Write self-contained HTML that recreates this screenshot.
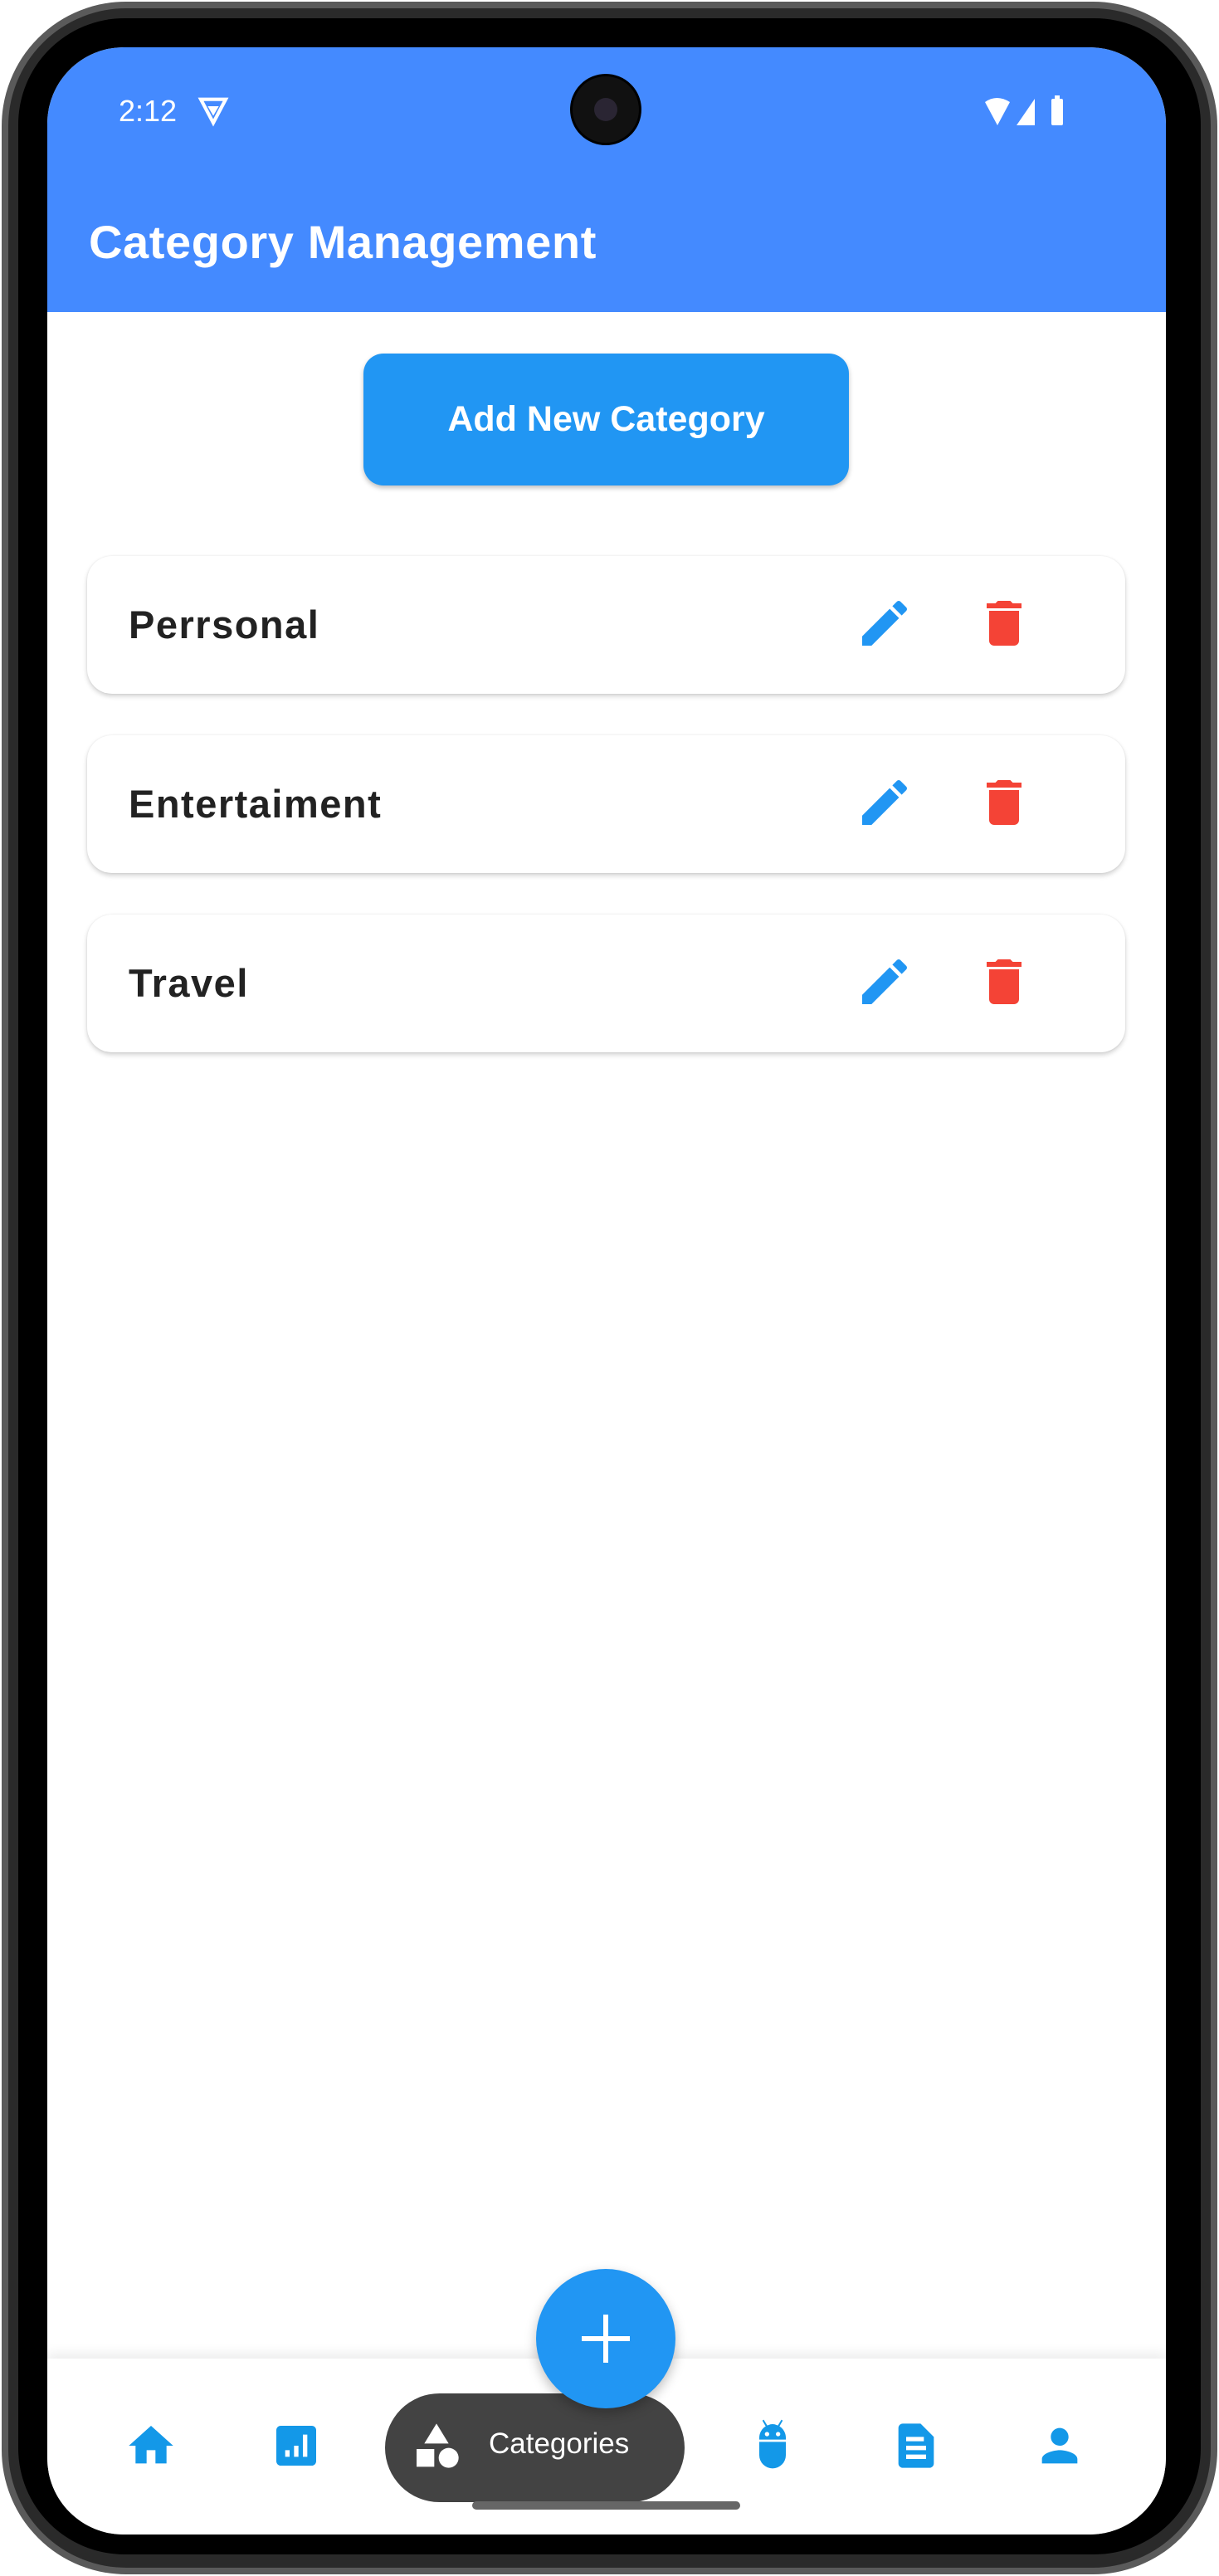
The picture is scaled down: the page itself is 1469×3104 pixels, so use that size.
<!DOCTYPE html>
<html><head><meta charset="utf-8"><style>
*{margin:0;padding:0;box-sizing:border-box}
body{width:1469px;height:3104px;background:#fff;position:relative;overflow:hidden;font-family:"Liberation Sans",sans-serif}
.phone{position:absolute;left:2px;top:2px;width:1465px;height:3100px;border-radius:150px;background:#2a2a2a;border:8px solid #5a5a5a}
.bezel{position:absolute;left:22px;top:22px;width:1425px;height:3056px;border-radius:128px;background:#000}
.screen{position:absolute;left:57px;top:57px;width:1348px;height:2997px;border-radius:92px;background:#fff;overflow:hidden}
.bar{position:absolute;left:0;top:0;width:1348px;height:319px;background:#448AFF}
.abs{position:absolute}
.card{position:absolute;left:48px;width:1251px;height:166px;background:#fff;border-radius:30px;box-shadow:0 3px 6px rgba(0,0,0,.18),0 0 2px rgba(0,0,0,.08)}
.card span{position:absolute;left:50px;top:0;line-height:166px;font-size:47px;color:#222;letter-spacing:1.5px;font-weight:bold}
.card svg{position:absolute;top:45px}
.nav{position:absolute;left:0;top:2785px;width:1348px;height:212px;background:#fff;box-shadow:0 -6px 14px rgba(0,0,0,.08)}
</style></head><body>
<div class="phone"></div>
<div class="bezel"></div>
<div class="screen">
 <div class="bar"></div>
 <div class="abs" style="left:86px;top:56px;color:#fff;font-size:36px">2:12</div>
 <svg class="abs" style="left:180px;top:56px" width="40" height="40" viewBox="0 0 24 24"><path d="M3 4h18l-9 17z" fill="none" stroke="#fff" stroke-width="2.5"/><path d="M8 9h8l-4 7z" fill="#fff"/></svg>
 <div class="abs" style="left:630px;top:32px;width:86px;height:86px;border-radius:50%;background:#111;border:3px solid #000"><div style="margin:26px;width:28px;height:28px;border-radius:50%;background:#2a2533"></div></div>
 <svg class="abs" style="left:1130px;top:58px" width="120" height="40" viewBox="0 0 60 20"><path d="M0 4Q7-1 15 4L7.5 18z" fill="#fff"/><path d="M30 2V18H19z" fill="#fff"/><rect x="40" y="2" width="7" height="16" rx="1" fill="#fff"/><rect x="42" y="0" width="3" height="3" fill="#fff"/></svg>
 <div class="abs" style="left:50px;top:202px;color:#fff;font-size:56px;font-weight:bold;letter-spacing:0.6px">Category Management</div>
 <div class="abs" style="left:381px;top:369px;width:585px;height:159px;border-radius:24px;background:#2196F3;box-shadow:0 3px 6px rgba(0,0,0,.25);color:#fff;font-size:43px;font-weight:bold;text-align:center;line-height:159px">Add New Category</div>

 <div class="card" style="top:613px"><span>Perrsonal</span>
  <svg style="left:925px" width="72" height="72" viewBox="0 0 24 24"><path fill="#2196F3" d="M3 17.25V21h3.75L17.81 9.94l-3.75-3.75L3 17.25zM20.71 7.04a1 1 0 000-1.41l-2.34-2.34a1 1 0 00-1.41 0l-1.83 1.83 3.75 3.75 1.83-1.83z"/></svg>
  <svg style="left:1069px" width="72" height="72" viewBox="0 0 24 24"><path fill="#F44336" d="M6 19c0 1.1.9 2 2 2h8c1.1 0 2-.9 2-2V7H6v12zM19 4h-3.5l-1-1h-5l-1 1H5v2h14V4z"/></svg></div>
 <div class="card" style="top:829px"><span>Entertaiment</span>
  <svg style="left:925px" width="72" height="72" viewBox="0 0 24 24"><path fill="#2196F3" d="M3 17.25V21h3.75L17.81 9.94l-3.75-3.75L3 17.25zM20.71 7.04a1 1 0 000-1.41l-2.34-2.34a1 1 0 00-1.41 0l-1.830 1.83 3.75 3.75 1.83-1.83z"/></svg>
  <svg style="left:1069px" width="72" height="72" viewBox="0 0 24 24"><path fill="#F44336" d="M6 19c0 1.1.9 2 2 2h8c1.1 0 2-.9 2-2V7H6v12zM19 4h-3.5l-1-1h-5l-1 1H5v2h14V4z"/></svg></div>
 <div class="card" style="top:1045px"><span>Travel</span>
  <svg style="left:925px" width="72" height="72" viewBox="0 0 24 24"><path fill="#2196F3" d="M3 17.25V21h3.75L17.81 9.94l-3.75-3.75L3 17.25zM20.71 7.04a1 1 0 000-1.41l-2.34-2.34a1 1 0 00-1.41 0l-1.83 1.83 3.75 3.75 1.83-1.83z"/></svg>
  <svg style="left:1069px" width="72" height="72" viewBox="0 0 24 24"><path fill="#F44336" d="M6 19c0 1.1.9 2 2 2h8c1.1 0 2-.9 2-2V7H6v12zM19 4h-3.5l-1-1h-5l-1 1H5v2h14V4z"/></svg></div>

 <div class="nav"></div>
 <svg class="abs" style="left:93px;top:2858px" width="64" height="64" viewBox="0 0 24 24"><path fill="#1398E8" d="M10 20v-6h4v6h5v-8h3L12 3 2 12h3v8z"/></svg>
 <svg class="abs" style="left:268px;top:2858px" width="64" height="64" viewBox="0 0 24 24"><path fill="#1398E8" d="M19 3H5a2 2 0 00-2 2v14a2 2 0 002 2h14a2 2 0 002-2V5a2 2 0 00-2-2zM9 17H7v-3h2v3zm4 0h-2v-5h2v5zm4 0h-2V7h2v10z"/></svg>
 <div class="abs" style="left:407px;top:2827px;width:361px;height:131px;border-radius:66px;background:#434343"></div>
 <svg class="abs" style="left:437px;top:2858px" width="64" height="64" viewBox="0 0 24 24"><path fill="#fff" d="M12 2l-5.5 9h11z"/><circle cx="17.5" cy="17.5" r="4.5" fill="#fff"/><path fill="#fff" d="M3 13.5h8v8H3z"/></svg>
 <div class="abs" style="left:532px;top:2868px;color:#fff;font-size:35px">Categories</div>
 <svg class="abs" style="left:842px;top:2856px" width="64" height="64" viewBox="0 0 24 24"><path fill="#1398E8" d="M8 1l1.6 2.6A5.8 5.8 0 0112 3a5.8 5.8 0 012.4.6L16 1l.6.4-1.5 2.6A6 6 0 0118 9v1H6V9a6 6 0 012.9-5l-1.5-2.6zM6 11h12v6a6 6 0 01-12 0z"/><circle cx="9.5" cy="7.5" r="1" fill="#fff"/><circle cx="14.5" cy="7.5" r="1" fill="#fff"/></svg>
 <svg class="abs" style="left:1015px;top:2858px" width="64" height="64" viewBox="0 0 24 24"><path fill="#1398E8" d="M4 4a2 2 0 012-2h8l6 6v12a2 2 0 01-2 2H6a2 2 0 01-2-2zM7.5 8v2h8V8zm0 4v2h9v-2zm0 4v2h9v-2z"/></svg>
 <svg class="abs" style="left:1188px;top:2858px" width="64" height="64" viewBox="0 0 24 24"><path fill="#1398E8" d="M12 12c2.21 0 4-1.79 4-4s-1.79-4-4-4-4 1.79-4 4 1.79 4 4 4zm0 2c-2.67 0-8 1.34-8 4v2h16v-2c0-2.66-5.330-4-8-4z"/></svg>
 <div class="abs" style="left:589px;top:2677px;width:168px;height:168px;border-radius:50%;background:#2196F3;box-shadow:0 6px 14px rgba(0,0,0,.25)"></div>
 <div class="abs" style="left:644px;top:2758px;width:58px;height:6px;background:#fff"></div>
 <div class="abs" style="left:670px;top:2732px;width:6px;height:58px;background:#fff"></div>
 <div class="abs" style="left:512px;top:2957px;width:323px;height:10px;border-radius:5px;background:#666"></div>
</div>
</body></html>
